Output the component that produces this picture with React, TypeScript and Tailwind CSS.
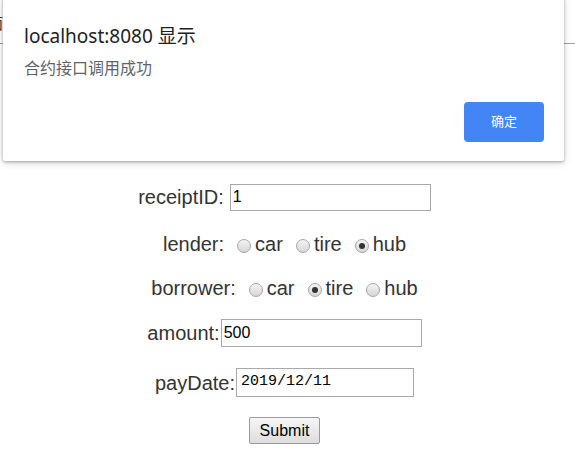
import React from 'react';

const Radio = ({ checked }: { checked?: boolean }) => (
  <span className="relative top-[2px] inline-flex h-[14px] w-[14px] shrink-0 items-center justify-center rounded-full border border-[#a6a6a6] bg-gradient-to-b from-[#f4f4f4] to-[#d6d6d6]">
    {checked && <span className="h-[6px] w-[6px] rounded-full bg-[#333]" />}
  </span>
);

const RadioGroup = ({ label, value }: { label: string; value: string }) => (
  <div className="flex items-center">
    <span>{label}</span>
    {['car', 'tire', 'hub'].map((opt) => (
      <span key={opt} className="ml-[13px] flex items-center">
        <Radio checked={opt === value} />
        <span className="ml-[4px]">{opt}</span>
      </span>
    ))}
  </div>
);

export default function App() {
  return (
    <div className="relative h-[468px] w-[575px] overflow-hidden bg-white font-['Liberation_Sans',Arial,sans-serif]">
      {/* page header behind the dialog */}
      <div className="h-[44px] border-b border-[#a0a0a0] pt-[12px] font-['Noto_Sans_CJK_SC',sans-serif] text-[15px] text-[#333]">
        <span className="-ml-[12px]">面</span>
      </div>

      <div className="w-[569px] text-[20px] text-[#333]">
        <div className="mt-[139px] flex h-[28px] items-center justify-center">
          <span>receiptID:</span>
          <div className="ml-[6px] flex h-[27px] w-[201px] items-center border border-[#a9a9a9] px-[2px] text-[16px] text-black">1</div>
        </div>
        <div className="mt-[19px] flex h-[28px] items-center justify-center">
          <RadioGroup label="lender:" value="hub" />
        </div>
        <div className="mt-[16px] flex h-[28px] items-center justify-center">
          <RadioGroup label="borrower:" value="tire" />
        </div>
        <div className="mt-[17px] flex h-[28px] items-center justify-center">
          <span>amount:</span>
          <div className="ml-[1px] flex h-[28px] w-[201px] items-center border border-[#a9a9a9] px-[2px] text-[16px] text-black">500</div>
        </div>
        <div className="mt-[21px] flex h-[29px] items-center justify-center">
          <span>payDate:</span>
          <div className="ml-[1px] flex h-[29px] w-[178px] items-center border border-[#a9a9a9] px-[4px] font-['Liberation_Mono',monospace] text-[15px] text-black">2019/12/11</div>
        </div>
        <div className="mt-[20px] flex justify-center">
          <button className="h-[27px] w-[71px] rounded-[2px] border border-[#9a9a9a] bg-gradient-to-b from-[#f6f6f6] to-[#dddddd] text-[16px] text-black">Submit</button>
        </div>
      </div>

      {/* alert dialog */}
      <div className="absolute left-[3px] top-[-4px] flex h-[165px] w-[561px] flex-col rounded-b-[2px] bg-white pl-[21px] pr-[20px] pt-[28px] shadow-[0_1px_3px_rgba(0,0,0,0.3),0_2px_8px_rgba(0,0,0,0.15)] font-['Noto_Sans','Noto_Sans_CJK_SC',sans-serif]">
        <div className="text-[19px] leading-[24px] text-[#202124]">localhost:8080 显示</div>
        <div className="mt-[10px] text-[16px] leading-[20px] text-[#5f6368]">合约接口调用成功</div>
        <div className="mt-auto mb-[19px] flex justify-end">
          <div className="flex h-[40px] w-[80px] items-center justify-center rounded-[4px] bg-[#4385f4] text-[13px] text-white">确定</div>
        </div>
      </div>
    </div>
  );
}
